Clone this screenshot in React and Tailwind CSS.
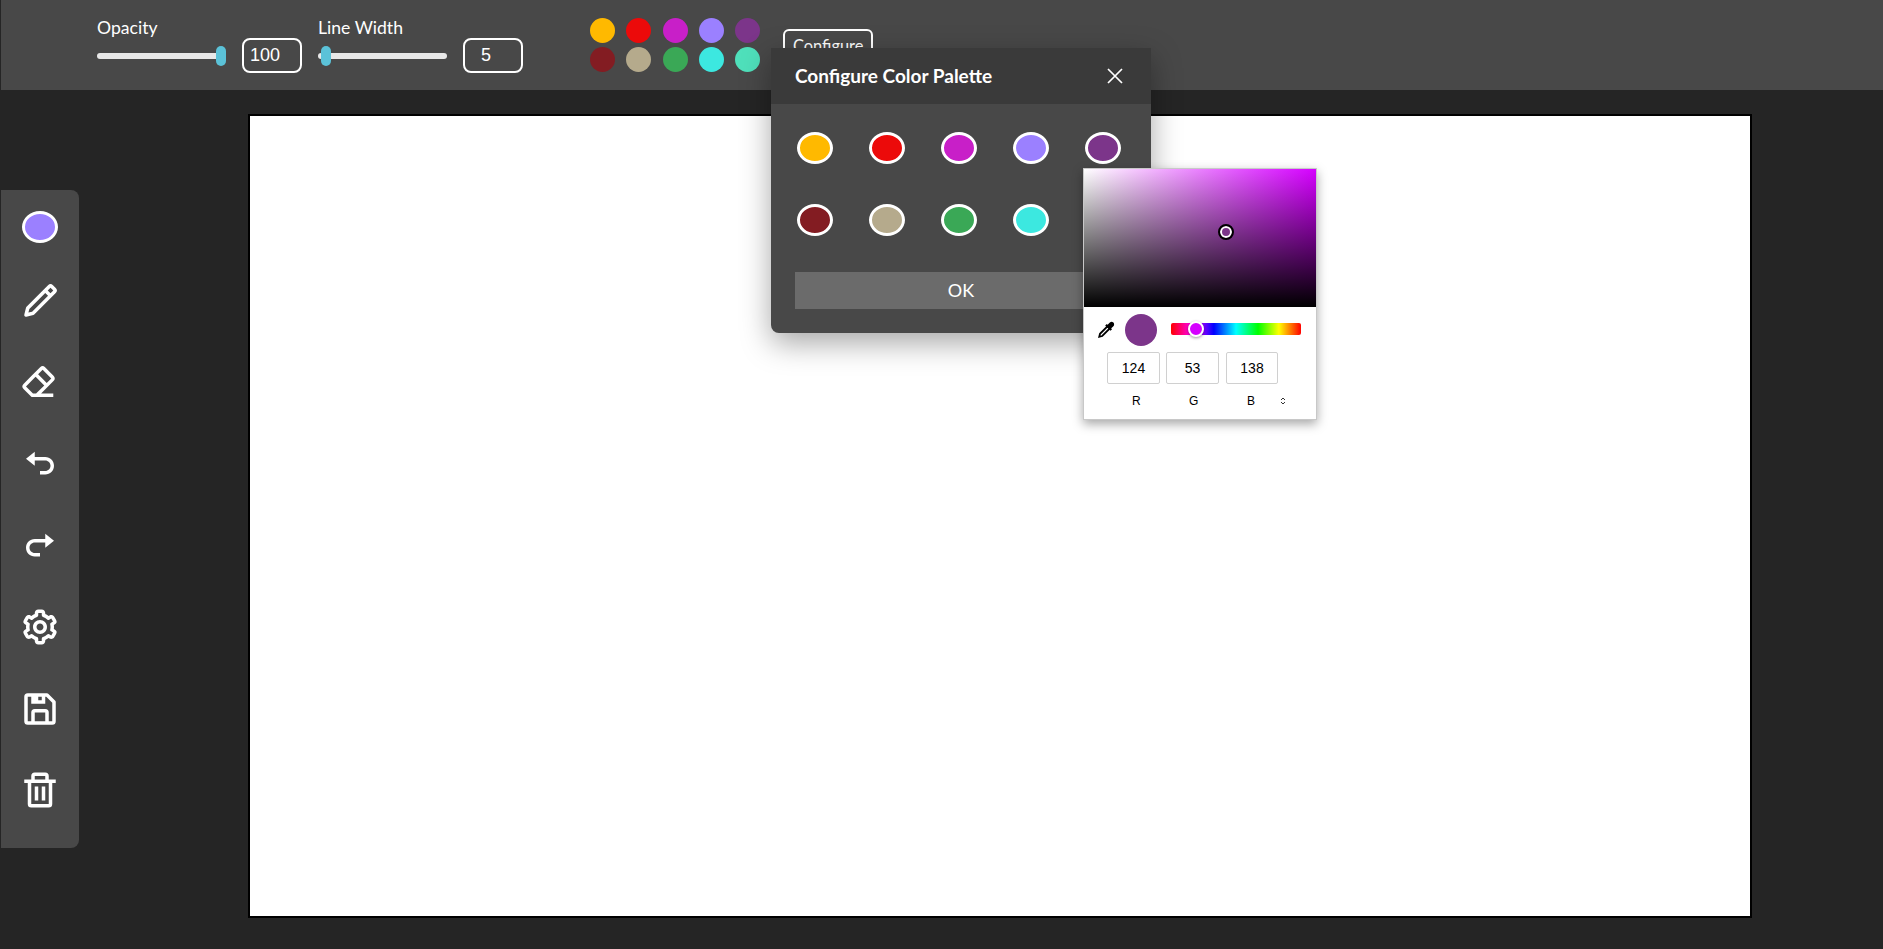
import { BiPencil, BiEraser, BiUndo, BiRedo, BiCog, BiSave, BiTrash } from "react-icons/bi";

const palette = ["#ffb900", "#ec0a0a", "#c81fc8", "#9b80ff", "#7c358a", "#831c22", "#b5aa8c", "#3aa856", "#3ce8e0", "#4fe0bb"];

function Slider({ label, thumbClass, value }) {
  return (
    <div className="flex flex-col">
      <div className="h-[21px] text-[17.6px] leading-[21px] text-white">{label}</div>
      <div className="flex items-center">
        <div className="relative h-[6px] w-[129px] rounded-full bg-[#e8e8e8]">
          <div className={`absolute top-[-7px] h-[20px] w-[10px] rounded-[5px] bg-[#5bc2d8] ${thumbClass}`}></div>
        </div>
        <div className="ml-[16px] flex h-[35px] w-[60px] items-center justify-center rounded-[8px] border-2 border-white pr-[14px] font-['Liberation_Sans',sans-serif] text-[18px] text-white">
          {value}
        </div>
      </div>
    </div>
  );
}

export default function App() {
  const tools = [BiPencil, BiEraser, BiUndo, BiRedo, BiCog, BiSave, BiTrash];

  return (
    <div className="relative h-screen overflow-hidden bg-[#252525] pl-px font-['Lato',sans-serif]">
      {/* top bar */}
      <div className="flex h-[90px] items-start bg-[#484848] pl-[96px]">
        <div className="mt-[17px]">
          <Slider label="Opacity" thumbClass="left-[119px]" value="100" />
        </div>
        <div className="ml-[16px] mt-[17px]">
          <Slider label="Line Width" thumbClass="left-[3px]" value="5" />
        </div>
        <div className="ml-[67px] mt-[18px] grid grid-cols-[repeat(5,25px)] gap-x-[11.3px] gap-y-[4px]">
          {palette.map((c) => (
            <div key={c} className="h-[25px] w-[25px] rounded-full" style={{ backgroundColor: c }}></div>
          ))}
        </div>
        <button className="ml-[23px] mt-[29px] h-[34px] w-[90px] rounded-[6px] border-2 border-white text-[16.4px] leading-[30px] text-white">
          Configure
        </button>
      </div>

      {/* tools + canvas */}
      <div className="flex items-start">
        <div className="mt-[100px] flex h-[658px] w-[78px] flex-col items-center rounded-r-[8px] bg-[#484848] pt-[21px]">
          <div className="h-[32px] w-[36px] rounded-[50%] border-[3px] border-white bg-[#9b80ff]"></div>
          <div className="mt-[37px] flex flex-col items-center gap-[39.5px]">
            {tools.map((Icon, i) => (
              <Icon key={i} className="text-[42px] text-white" />
            ))}
          </div>
        </div>
        <div className="ml-[169px] mt-[24px] h-[804px] w-[1504px] border-2 border-black bg-white"></div>
      </div>

      {/* palette dialog */}
      <div className="absolute left-[771px] top-[48px] h-[285px] w-[380px] overflow-hidden rounded-b-[8px] bg-[#484848] shadow-[0_10px_30px_rgba(0,0,0,0.35)]">
        <div className="flex h-[56px] items-center justify-between bg-[#3a3a3a] pl-[24px] pr-[27px]">
          <span className="text-[19px] font-bold text-white">Configure Color Palette</span>
          <svg width="18" height="18" viewBox="0 0 18 18" stroke="#fff" strokeWidth="1.7" fill="none">
            <path d="M2 2l14 14M16 2L2 16" />
          </svg>
        </div>
        <div className="px-[24px]">
          <div className="mt-[28px] grid grid-cols-[repeat(5,36px)] gap-x-[36px] gap-y-[40px] pl-[2px]">
            {palette.slice(0, 9).map((c) => (
              <div key={c} className="h-[32px] w-[36px] rounded-[50%] border-[3px] border-white" style={{ backgroundColor: c }}></div>
            ))}
          </div>
          <button className="mt-[36px] h-[37px] w-full bg-[#6b6b6b] text-[18px] text-white">OK</button>
        </div>
      </div>

      {/* color picker */}
      <div className="absolute left-[1083px] top-[168px] h-[252px] w-[234px] border border-[#c8c8c8] bg-white font-['Liberation_Sans',sans-serif] shadow-[0_4px_10px_rgba(0,0,0,0.35)]">
        <div className="relative h-[138px] bg-[linear-gradient(to_top,#000,transparent),linear-gradient(to_right,#fff,#d500ff)]">
          <div className="absolute left-[134px] top-[55px] h-[16px] w-[16px] rounded-full border-2 border-black bg-[#7c358a] shadow-[inset_0_0_0_2px_#fff]"></div>
        </div>
        <div className="flex items-center pl-[13px] pt-[7px]">
          <svg width="18" height="18" viewBox="0 0 24 24" fill="none" stroke="#000" strokeWidth="2.4">
            <path d="M3 21l1-4L14 7l3 3L7 20z" />
            <path d="M12 5l7 7" strokeWidth="3" />
            <path d="M15 6l3-3a2 2 0 0 1 3 3l-3 3z" fill="#000" />
          </svg>
          <div className="ml-[10px] h-[32px] w-[32px] rounded-full bg-[#7c358a]"></div>
          <div className="relative top-[-1px] ml-[14px] h-[12px] w-[130px] rounded-[2px] bg-[linear-gradient(to_right,#f00_0%,#f0f_17%,#00f_33%,#0ff_50%,#0f0_67%,#ff0_83%,#f00_100%)]">
            <div className="absolute left-[17px] top-[-2px] h-[16px] w-[16px] rounded-full border-2 border-white bg-[#d500ff] shadow-[0_1px_3px_rgba(0,0,0,0.4)]"></div>
          </div>
        </div>
        <div className="ml-[23px] mt-[6px] flex gap-[6px]">
          <div className="flex h-[32px] w-[53px] items-center justify-center rounded-[2px] border border-[#d0d0d0] text-[14px] text-black">124</div>
          <div className="flex h-[32px] w-[53px] items-center justify-center rounded-[2px] border border-[#d0d0d0] text-[14px] text-black">53</div>
          <div className="ml-[1px] flex h-[32px] w-[52px] items-center justify-center rounded-[2px] border border-[#d0d0d0] text-[14px] text-black">138</div>
        </div>
        <div className="relative mt-[10px] h-[14px] text-[12px] leading-[14px] text-black">
          <span className="absolute left-[48px]">R</span>
          <span className="absolute left-[105px]">G</span>
          <span className="absolute left-[163px]">B</span>
          <svg className="absolute left-[194px] top-[2px]" width="10" height="10" viewBox="0 0 10 10" fill="none" stroke="#333" strokeWidth="1">
            <path d="M3 4l2-2 2 2M3 6l2 2 2-2" />
          </svg>
        </div>
      </div>
    </div>
  );
}
